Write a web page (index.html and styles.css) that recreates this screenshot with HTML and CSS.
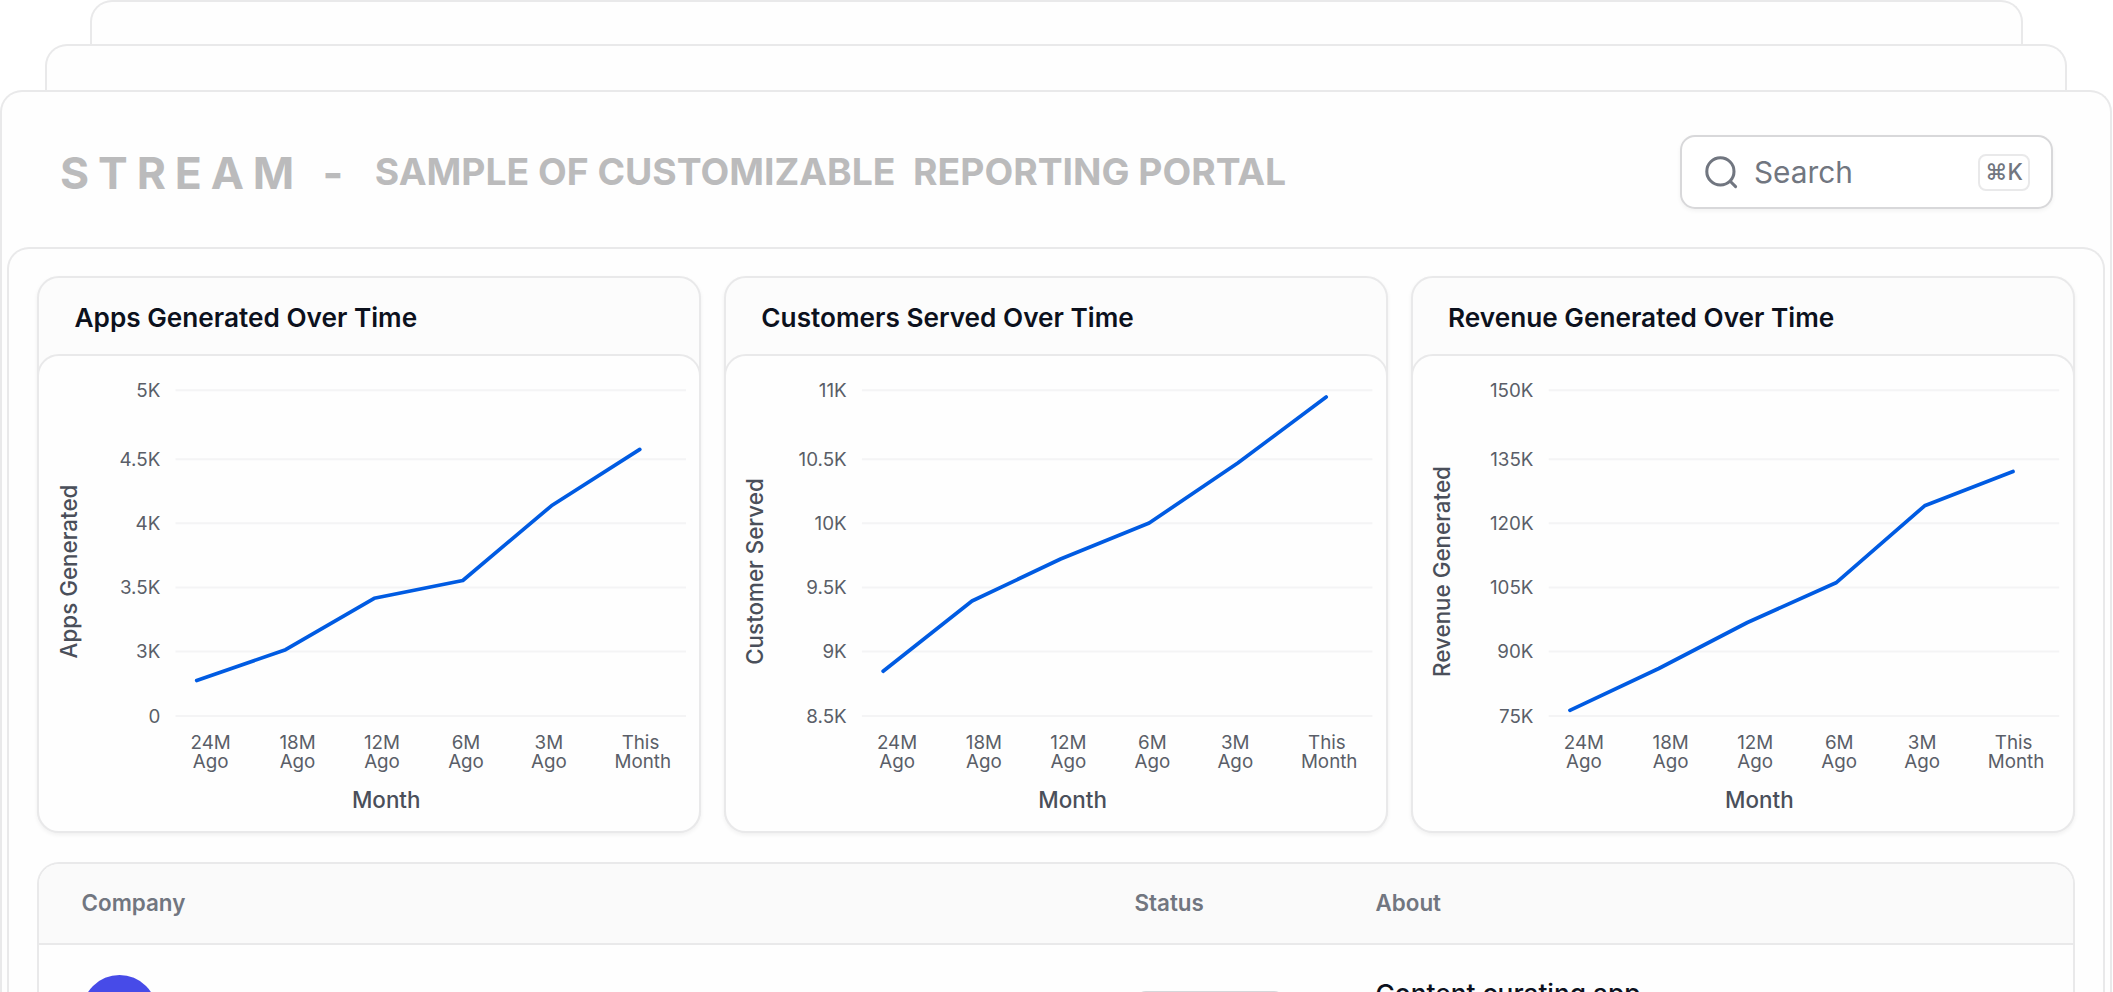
FILE: index.html
```html
<!DOCTYPE html>
<html lang="en">
<head>
<meta charset="utf-8">
<title>Stream - Reporting Portal</title>
<link rel="stylesheet" href="styles.css">
</head>
<body>
<div class="sheet sheet-back"></div>
<div class="sheet sheet-middle"></div>
<main class="sheet sheet-front">
  <header class="topbar">
    <div class="brand">
      <span class="brand-name">STREAM -&nbsp;</span>
      <span class="brand-sub">SAMPLE OF CUSTOMIZABLE&nbsp; REPORTING PORTAL</span>
    </div>
    <div class="search">
      <svg class="search-icon" viewBox="0 0 24 24"><path d="M21 21L17.5 17.5M20 11.5a8.5 8.5 0 1 1-17 0a8.5 8.5 0 0 1 17 0Z"/></svg>
      <span class="search-label">Search</span>
      <kbd class="search-key">⌘K</kbd>
    </div>
  </header>

  <div class="panel">
    <section class="cards">
      <article class="card">
        <h2 class="card-title">Apps Generated Over Time</h2>
        <div class="card-body">
          <svg class="chart" viewBox="39 356 660 474">
            <path class="grid" d="M175.5 390.3H686M175.5 459.3H686M175.5 523.3H686M175.5 587.4H686M175.5 651.6H686M175.5 716H686"/>
            <g class="tick tick-y">
              <text x="160.3" y="397">5K</text>
              <text x="160.3" y="466">4.5K</text>
              <text x="160.3" y="530">4K</text>
              <text x="160.3" y="594.2">3.5K</text>
              <text x="160.3" y="658.3">3K</text>
              <text x="160.3" y="722.7">0</text>
            </g>
            <g class="tick">
              <text x="210.7" y="749">24M<tspan x="210.7" y="767.7">Ago</tspan></text>
              <text x="297.5" y="749">18M<tspan x="297.5" y="767.7">Ago</tspan></text>
              <text x="382" y="749">12M<tspan x="382" y="767.7">Ago</tspan></text>
              <text x="466" y="749">6M<tspan x="466" y="767.7">Ago</tspan></text>
              <text x="548.9" y="749">3M<tspan x="548.9" y="767.7">Ago</tspan></text>
              <text x="640.5" y="749">This<tspan x="642.8" y="767.7">Month</tspan></text>
            </g>
            <text class="axis" x="386.2" y="808.2">Month</text>
            <text class="axis" transform="translate(77 571.5) rotate(-90)">Apps Generated</text>
            <path class="line" d="M196.7 680.5L285.6 649.7L374.2 598.3L462.8 580.5L551.4 505.8L639.8 449.4"/>
          </svg>
        </div>
      </article>

      <article class="card">
        <h2 class="card-title">Customers Served Over Time</h2>
        <div class="card-body">
          <svg class="chart" viewBox="39.6 356 660 474">
            <path class="grid" d="M175.5 390.3H686M175.5 459.3H686M175.5 523.3H686M175.5 587.4H686M175.5 651.6H686M175.5 716H686"/>
            <g class="tick tick-y">
              <text x="160.3" y="397">11K</text>
              <text x="160.3" y="466">10.5K</text>
              <text x="160.3" y="530">10K</text>
              <text x="160.3" y="594.2">9.5K</text>
              <text x="160.3" y="658.3">9K</text>
              <text x="160.3" y="722.7">8.5K</text>
            </g>
            <g class="tick">
              <text x="210.7" y="749">24M<tspan x="210.7" y="767.7">Ago</tspan></text>
              <text x="297.5" y="749">18M<tspan x="297.5" y="767.7">Ago</tspan></text>
              <text x="382" y="749">12M<tspan x="382" y="767.7">Ago</tspan></text>
              <text x="466" y="749">6M<tspan x="466" y="767.7">Ago</tspan></text>
              <text x="548.9" y="749">3M<tspan x="548.9" y="767.7">Ago</tspan></text>
              <text x="640.5" y="749">This<tspan x="642.8" y="767.7">Month</tspan></text>
            </g>
            <text class="axis" x="386.2" y="808.2">Month</text>
            <text class="axis" transform="translate(76.8 571.5) rotate(-90)">Customer Served</text>
            <path class="line" d="M196.7 671.2L285.6 601L374.2 559L462.8 523L551.4 463L639.8 397"/>
          </svg>
        </div>
      </article>

      <article class="card">
        <h2 class="card-title">Revenue Generated Over Time</h2>
        <div class="card-body">
          <svg class="chart" viewBox="39.8 356 660 474">
            <path class="grid" d="M175.5 390.3H686M175.5 459.3H686M175.5 523.3H686M175.5 587.4H686M175.5 651.6H686M175.5 716H686"/>
            <g class="tick tick-y">
              <text x="160.3" y="397">150K</text>
              <text x="160.3" y="466">135K</text>
              <text x="160.3" y="530">120K</text>
              <text x="160.3" y="594.2">105K</text>
              <text x="160.3" y="658.3">90K</text>
              <text x="160.3" y="722.7">75K</text>
            </g>
            <g class="tick">
              <text x="210.7" y="749">24M<tspan x="210.7" y="767.7">Ago</tspan></text>
              <text x="297.5" y="749">18M<tspan x="297.5" y="767.7">Ago</tspan></text>
              <text x="382" y="749">12M<tspan x="382" y="767.7">Ago</tspan></text>
              <text x="466" y="749">6M<tspan x="466" y="767.7">Ago</tspan></text>
              <text x="548.9" y="749">3M<tspan x="548.9" y="767.7">Ago</tspan></text>
              <text x="640.5" y="749">This<tspan x="642.8" y="767.7">Month</tspan></text>
            </g>
            <text class="axis" x="386.2" y="808.2">Month</text>
            <text class="axis" transform="translate(76.8 571.5) rotate(-90)">Revenue Generated</text>
            <path class="line" d="M196.7 710.3L285.6 668.5L374.2 622.5L462.8 582.8L551.4 505.8L639.8 471.5"/>
          </svg>
        </div>
      </article>
    </section>

    <section class="table">
      <div class="row row-head">
        <span>Company</span><span>Status</span><span>About</span>
      </div>
      <div class="row row-item">
        <span class="avatar"></span>
        <span class="pill"></span>
        <span class="about">Content curating app</span>
      </div>
    </section>
  </div>
</main>
</body>
</html>
```

FILE: styles.css
```css
* { box-sizing: border-box; }

html { height: 992px; overflow: hidden; }

body {
  display: flex;
  flex-direction: column;
  margin: 0;
  height: 992px;
  overflow: hidden;
  background: #fff;
  font-family: Inter, "Liberation Sans", sans-serif;
}

.sheet {
  border: 2px solid #e9e9ea;
  border-bottom: 0;
  border-radius: 22px 22px 0 0;
  background: #fefefe;
}
.sheet-back { flex: none; height: 44px; margin: 0 90px; }
.sheet-middle { flex: none; height: 46px; margin: 0 46px 0 45px; }
.sheet-front {
  display: flex;
  flex: 1;
  flex-direction: column;
  min-height: 0;
  margin-right: 1px;
  padding: 0 5px;
}

.topbar {
  display: flex;
  flex: none;
  align-items: center;
  justify-content: space-between;
  height: 155px;
  padding: 43px 52px 38px 53px;
}

.brand {
  display: flex;
  align-items: center;
  padding-top: 2px;
  color: #bbbbbc;
  font-weight: 700;
  white-space: pre;
}
.brand-name { font-size: 44.5px; line-height: 54px; letter-spacing: 0.2em; }
.brand-sub { margin-left: 3px; padding-bottom: 3px; font-size: 37.3px; line-height: 46px; }

.search {
  display: flex;
  align-items: center;
  width: 373px;
  height: 74px;
  padding: 0 21px 0 20px;
  border: 2px solid #d8d8da;
  border-radius: 15px;
  background: #fff;
  box-shadow: 0 2px 4px rgba(10, 13, 18, 0.05);
  color: #717680;
}
.search-icon {
  width: 38.4px;
  height: 38.4px;
  margin-right: 13.5px;
  fill: none;
  stroke: #717680;
  stroke-width: 1.9;
  stroke-linecap: round;
}
.search-label { flex: 1; font-size: 29.8px; line-height: 44px; }
.search-key {
  width: 52px;
  height: 37px;
  border: 2px solid #e9e9ea;
  border-radius: 8px;
  font: 500 22.4px/32px Inter, "Liberation Sans", sans-serif;
  text-align: center;
  white-space: nowrap;
}

.panel {
  display: flex;
  flex: 1;
  flex-direction: column;
  min-height: 0;
  padding: 27px 28px 0;
  border: 2px solid #e9e9ea;
  border-bottom: 0;
  border-radius: 22px 22px 0 0;
}

.cards {
  display: grid;
  flex: none;
  grid-template-columns: repeat(3, 1fr);
  gap: 22.4px;
}
.card {
  border: 2px solid #e9e9ea;
  border-radius: 22px;
  background: #fcfcfc;
  box-shadow: 0 2px 4px rgba(10, 13, 18, 0.06);
}
.card-title {
  margin: 0;
  padding: 21px 35.5px 17px;
  color: #0c111d;
  font-size: 26.2px;
  font-weight: 600;
  line-height: 38px;
}
.card-body {
  height: 479px;
  margin: 0 -2px -2px;
  border: 2px solid #e9e9ea;
  border-radius: 22px;
  background: #fefefe;
}
.chart { display: block; width: 660px; height: 474px; }
.grid { fill: none; stroke: #f4f4f5; stroke-width: 2; }
.tick { fill: #5a5e68; font-size: 18.8px; text-anchor: middle; }
.tick-y { text-anchor: end; }
.axis { fill: #4a4f5a; font-size: 22.4px; font-weight: 500; text-anchor: middle; }
.line {
  fill: none;
  stroke: #005be2;
  stroke-width: 3.7;
  stroke-linecap: round;
  stroke-linejoin: round;
}

.table {
  flex: 1;
  min-height: 0;
  margin-top: 29px;
  border: 2px solid #e9e9ea;
  border-bottom: 0;
  border-radius: 22px 22px 0 0;
  background: #fefefe;
  overflow: hidden;
}
.row {
  display: grid;
  grid-template-columns: 1053px 241px 1fr;
  padding-left: 42.5px;
}
.row-head {
  align-items: center;
  height: 81px;
  padding-bottom: 1px;
  border-bottom: 2px solid #e9e9ea;
  background: #fafafa;
  color: #717680;
  font-size: 22.4px;
  font-weight: 600;
  line-height: 34px;
}
.row-item { align-items: start; padding-top: 29.5px; }
.avatar { width: 75px; height: 75px; border-radius: 50%; background: #474be8; }
.pill {
  width: 150px;
  height: 41px;
  margin-top: 16.5px;
  border: 2px solid #d5d7da;
  border-radius: 11px;
}
.about {
  color: #0c111d;
  font-size: 26.3px;
  font-weight: 500;
  line-height: 38px;
}
```
